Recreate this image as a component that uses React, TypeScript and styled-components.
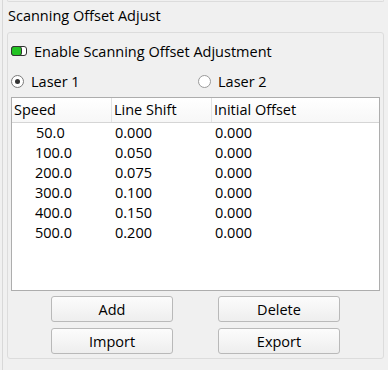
import styled, { createGlobalStyle } from "styled-components";

const GlobalStyle = createGlobalStyle`
  html, body {
    margin: 0;
    padding: 0;
    background: #f0f0f0;
  }
  body {
    font-family: "Open Sans", "Noto Sans", "Liberation Sans", sans-serif;
    font-size: 14.5px;
    color: #000;
  }
`;

const rows = [
  { speed: "50.0", shift: "0.000", offset: "0.000" },
  { speed: "100.0", shift: "0.050", offset: "0.000" },
  { speed: "200.0", shift: "0.075", offset: "0.000" },
  { speed: "300.0", shift: "0.100", offset: "0.000" },
  { speed: "400.0", shift: "0.150", offset: "0.000" },
  { speed: "500.0", shift: "0.200", offset: "0.000" },
];

// left edge of the neighbouring splitter, then the panel itself
const Page = styled.div`
  width: 386px;
  height: 370px;
  margin-left: 2px;
  box-sizing: border-box;
  border-left: 1px solid #d8d8d8;
  padding-left: 4px;
  overflow: hidden;
  background: #f0f0f0;
`;

const TopStub = styled.div`
  width: 377px;
  height: 2px;
  box-sizing: border-box;
  border: 1px solid #dcdcdc;
  border-top: none;
  border-radius: 0 0 3px 3px;
`;

const Title = styled.div`
  height: 30px;
  line-height: 28px;
  padding-left: 1px;
  white-space: nowrap;
`;

const GroupBox = styled.div`
  width: 377px;
  height: 327px;
  box-sizing: border-box;
  border: 1px solid #dcdcdc;
  border-radius: 3px;
  padding: 0 3px;
  display: flex;
  flex-direction: column;
`;

const ToggleRow = styled.div`
  display: flex;
  align-items: center;
  gap: 7px;
  height: 20px;
  margin-top: 8px;
`;

const RadioRow = styled.div`
  display: grid;
  grid-template-columns: 187px 1fr;
  height: 20px;
  margin-top: 10px;
`;

const RadioLabel = styled.label`
  display: flex;
  align-items: center;
  gap: 7px;
`;

const RadioCircle = styled.span<{ $on?: boolean }>`
  width: 13px;
  height: 13px;
  box-sizing: border-box;
  border-radius: 50%;
  border: 1px solid ${(p) => (p.$on ? "#7a7a7a" : "#9a9a9a")};
  background: #fff;
  display: flex;
  align-items: center;
  justify-content: center;
  &::after {
    content: "";
    width: 5px;
    height: 5px;
    border-radius: 50%;
    background: ${(p) => (p.$on ? "#333" : "transparent")};
  }
`;

const Table = styled.div`
  margin-top: 6px;
  width: 369px;
  height: 194px;
  box-sizing: border-box;
  border: 1px solid #adadad;
  background: #fff;
`;

const HeaderRow = styled.div`
  display: grid;
  grid-template-columns: 100px 100px 1fr;
  height: 24px;
  border-bottom: 1px solid #d5d5d5;
  background: linear-gradient(#ffffff, #f7f7f7);
`;

const HeaderCell = styled.div`
  padding-left: 2px;
  line-height: 24px;
  border-right: 1px solid #e3e3e3;
  &:last-child {
    border-right: none;
  }
`;

const Row = styled.div`
  display: grid;
  grid-template-columns: 100px 100px 1fr;
  height: 20px;
  line-height: 20px;
`;

const Cell = styled.div<{ $indent?: number }>`
  padding-left: ${(p) => p.$indent ?? 3}px;
`;

const Buttons = styled.div`
  display: grid;
  grid-template-columns: 122px 122px;
  column-gap: 45px;
  row-gap: 6px;
  padding-left: 40px;
  margin-top: 5px;
`;

const Button = styled.button`
  height: 26px;
  box-sizing: border-box;
  border: 1px solid #b9b9b9;
  border-radius: 3px;
  background: linear-gradient(#fcfcfc, #eeeeee);
  font-family: inherit;
  font-size: 14.5px;
  color: #000;
  padding: 0;
`;

function ToggleIcon() {
  return (
    <svg width="16" height="10" viewBox="0 0 16 10">
      <rect x="0.5" y="0.5" width="15" height="9" rx="2.5" fill="#fff" stroke="#333" />
      <rect x="0.5" y="0.5" width="10" height="9" rx="2.5" fill="#22c322" stroke="#333" />
    </svg>
  );
}

export default function App() {
  return (
    <>
      <GlobalStyle />
      <Page>
        <TopStub />
        <Title>Scanning Offset Adjust</Title>
        <GroupBox>
          <ToggleRow>
            <ToggleIcon />
            <span>Enable Scanning Offset Adjustment</span>
          </ToggleRow>
          <RadioRow>
            <RadioLabel>
              <RadioCircle $on />
              Laser 1
            </RadioLabel>
            <RadioLabel>
              <RadioCircle />
              Laser 2
            </RadioLabel>
          </RadioRow>
          <Table>
            <HeaderRow>
              <HeaderCell>Speed</HeaderCell>
              <HeaderCell>Line Shift</HeaderCell>
              <HeaderCell>Initial Offset</HeaderCell>
            </HeaderRow>
            {rows.map((r) => (
              <Row key={r.speed}>
                <Cell $indent={r.speed.length === 4 ? 24 : 23}>{r.speed}</Cell>
                <Cell>{r.shift}</Cell>
                <Cell>{r.offset}</Cell>
              </Row>
            ))}
          </Table>
          <Buttons>
            <Button>Add</Button>
            <Button>Delete</Button>
            <Button>Import</Button>
            <Button>Export</Button>
          </Buttons>
        </GroupBox>
      </Page>
    </>
  );
}
